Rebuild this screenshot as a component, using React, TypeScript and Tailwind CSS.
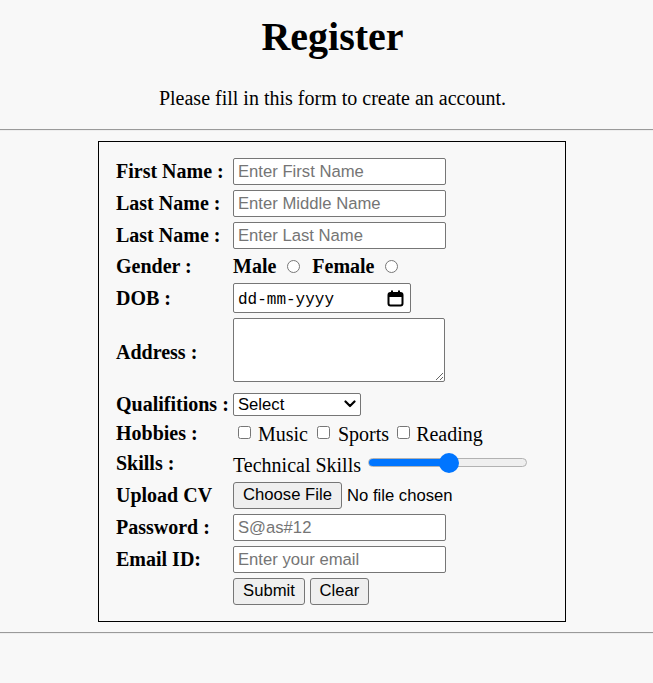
import React from "react";

const serif = "font-['Liberation_Serif','Times_New_Roman',serif]";
const sans = "font-['Liberation_Sans',Arial,sans-serif]";

function Label({ children }: { children: React.ReactNode }) {
  return (
    <div className={`w-[117px] shrink-0 ${serif} text-[20px] font-bold leading-[23px] text-black`}>
      {children}
    </div>
  );
}

function TextInput({ placeholder, type = "text" }: { placeholder: string; type?: string }) {
  return (
    <input
      type={type}
      placeholder={placeholder}
      className={`w-[213px] h-[27px] border border-[#767676] rounded-[2px] bg-white pl-[4px] pr-[2px] ${sans} text-[16.67px] text-black placeholder:text-[#757575] outline-none`}
    />
  );
}

function CalendarIcon() {
  return (
    <svg width="17" height="17" viewBox="0 0 17 17" fill="none">
      <rect x="1.5" y="3" width="14" height="12.5" rx="2" stroke="#000" strokeWidth="2" />
      <rect x="1.5" y="3" width="14" height="4" fill="#000" />
      <rect x="4" y="0.5" width="2" height="3.5" fill="#000" />
      <rect x="11" y="0.5" width="2" height="3.5" fill="#000" />
    </svg>
  );
}

function Chevron() {
  return (
    <svg width="12" height="8" viewBox="0 0 12 8" fill="none">
      <path d="M1.5 1.5 L6 6 L10.5 1.5" stroke="#000" strokeWidth="2.2" strokeLinecap="round" strokeLinejoin="round" />
    </svg>
  );
}

const btn = `h-[27px] border border-[#767676] rounded-[3px] bg-[#efefef] ${sans} text-[16.67px] text-black leading-none`;

export default function App() {
  return (
    <div className="min-h-[683px] w-full bg-[#f8f8f8] text-black">
      <div className="pl-[12px]">
        <h1 className={`pt-[14px] text-center ${serif} text-[40px] font-bold leading-[46px]`}>Register</h1>
        <p className={`mt-[27px] text-center ${serif} text-[20px] leading-[23px]`}>
          Please fill in this form to create an account.
        </p>
      </div>
      <div className="mt-[19px] h-[2px] border-t border-t-[#9a9a9a] border-b border-b-[#eeeeee]" />
      <div className="pl-[11px] mt-[10px]">
        <div className="mx-auto w-[468px] border border-black pl-[17px] pt-[16px] pb-[16px]">
          <div className="flex flex-col gap-[5px]">
            <div className="flex items-center h-[27px]">
              <Label>First Name :</Label>
              <TextInput placeholder="Enter First Name" />
            </div>
            <div className="flex items-center h-[27px]">
              <Label>Last Name :</Label>
              <TextInput placeholder="Enter Middle Name" />
            </div>
            <div className="flex items-center h-[27px]">
              <Label>Last Name :</Label>
              <TextInput placeholder="Enter Last Name" />
            </div>
            <div className="flex items-center h-[24px]">
              <Label>Gender :</Label>
              <div className={`flex items-center ${serif} text-[20px] font-bold leading-[23px]`}>
                <span>Male</span>
                <input type="radio" name="gender" className="ml-[11px] m-0 w-[13px] h-[13px]" />
                <span className="ml-[12px]">Female</span>
                <input type="radio" name="gender" className="ml-[10px] m-0 w-[13px] h-[13px]" />
              </div>
            </div>
            <div className="flex items-center h-[30px]">
              <Label>DOB :</Label>
              <div className="flex items-center justify-between w-[178px] h-[30px] border border-[#767676] rounded-[2px] bg-white pl-[4px] pr-[6px]">
                <span className="pt-[3px] font-['Liberation_Mono','Courier_New',monospace] text-[16px] leading-[20px] text-black">dd-mm-yyyy</span>
                <CalendarIcon />
              </div>
            </div>
            <div className="flex items-center h-[69px]">
              <Label>Address :</Label>
              <textarea className="self-start w-[212px] h-[64px] border border-[#767676] rounded-[2px] bg-white resize outline-none" />
            </div>
            <div className="flex items-center h-[24px]">
              <Label>Qualifitions :</Label>
              <div className={`flex items-center justify-between w-[128px] h-[23px] border border-[#767676] rounded-[2px] bg-white pl-[4px] pr-[4px] ${sans} text-[16.67px]`}>
                <span>Select</span>
                <Chevron />
              </div>
            </div>
            <div className="flex items-center h-[24px]">
              <Label>Hobbies :</Label>
              <div className={`flex items-center ${serif} text-[20px] leading-[23px]`}>
                <input type="checkbox" className="m-0 ml-[5px] mb-[2px] w-[13px] h-[13px]" />
                <span className="ml-[7px] mt-[2px]">Music</span>
                <input type="checkbox" className="m-0 ml-[9px] mb-[2px] w-[13px] h-[13px]" />
                <span className="ml-[8px] mt-[2px]">Sports</span>
                <input type="checkbox" className="m-0 ml-[8px] mb-[2px] w-[13px] h-[13px]" />
                <span className="ml-[6px] mt-[2px]">Reading</span>
              </div>
            </div>
            <div className="flex items-center h-[27px]">
              <Label>Skills :</Label>
              <div className={`flex items-center ${serif} text-[20px] leading-[23px]`}>
                <span className="mt-[3px]">Technical Skills</span>
                <div className="relative ml-[7px] flex items-center w-[159px] h-[20px] -translate-y-[1px]">
                  <div className="w-full h-[9px] rounded-full border border-[#b2b2b2] bg-[#efefef] overflow-hidden">
                    <div className="h-full w-[81px] bg-[#0075ff]" />
                  </div>
                  <div className="absolute left-[71px] top-0 w-[20px] h-[20px] rounded-full bg-[#0075ff]" />
                </div>
              </div>
            </div>
            <div className="flex items-center h-[27px]">
              <Label>Upload CV</Label>
              <button className={`${btn} w-[109px]`}>Choose File</button>
              <span className={`ml-[5px] ${sans} text-[16.67px]`}>No file chosen</span>
            </div>
            <div className="flex items-center h-[27px]">
              <Label>Password :</Label>
              <TextInput placeholder="S@as#12" type="password" />
            </div>
            <div className="flex items-center h-[27px]">
              <Label>Email ID:</Label>
              <TextInput placeholder="Enter your email" type="email" />
            </div>
            <div className="flex items-center h-[27px]">
              <div className="w-[117px] shrink-0" />
              <button className={`${btn} w-[72px]`}>Submit</button>
              <button className={`${btn} ml-[5px] w-[59px]`}>Clear</button>
            </div>
          </div>
        </div>
      </div>
      <div className="mt-[10px] h-[2px] border-t border-t-[#9a9a9a] border-b border-b-[#eeeeee]" />
    </div>
  );
}
